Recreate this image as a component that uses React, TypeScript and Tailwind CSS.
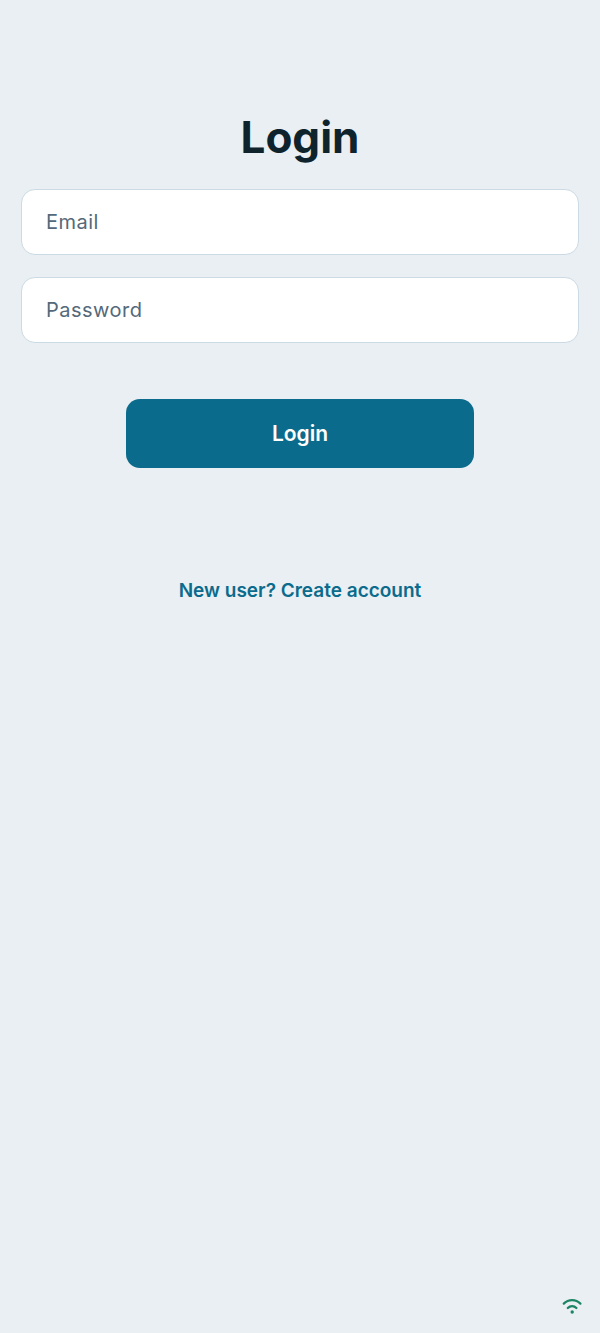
import React, { useState } from 'react';

const fieldClass =
    "w-full h-[66px] px-6 bg-white border border-[#cbdae3] rounded-[14px] text-[20px] tracking-wide text-[#0f232d] placeholder:text-[#54697a] placeholder:opacity-100 outline-none focus:border-[#0b6b8c]";

const WifiIcon: React.FC = () => (
    <svg
        className="w-6 h-6"
        viewBox="0 0 24 24"
        fill="none"
        stroke="#1b8463"
        strokeWidth="2.3"
        strokeLinecap="round"
        role="img"
        aria-label="Online"
    >
        <path d="M3.8 10.6C8.4 6 15.8 6 20.4 10.6" />
        <path d="M7.8 15C10.2 12.4 14 12.4 16.4 15" />
        <circle cx="12.2" cy="19" r="1.7" fill="#1b8463" stroke="none" />
    </svg>
);

const App: React.FC = () => {
    const [email, setEmail] = useState('');
    const [password, setPassword] = useState('');

    return (
        <div className="min-h-screen flex flex-col bg-[#e9eff3] font-['Inter',sans-serif]">
            <main className="flex-1 w-full px-[21px] pt-[108px] flex flex-col items-center">
                <h1 className="text-[44px] leading-[58px] font-bold text-[#0f232d]">Login</h1>

                <form
                    className="w-full mt-[23px] flex flex-col items-center"
                    onSubmit={(e) => e.preventDefault()}
                >
                    <div className="w-full flex flex-col gap-[22px]">
                        <input
                            type="email"
                            aria-label="Email"
                            placeholder="Email"
                            className={fieldClass}
                            value={email}
                            onChange={(e) => setEmail(e.target.value)}
                        />
                        <input
                            type="password"
                            aria-label="Password"
                            placeholder="Password"
                            className={fieldClass}
                            value={password}
                            onChange={(e) => setPassword(e.target.value)}
                        />
                    </div>

                    <button
                        type="submit"
                        className="w-5/8 h-[69px] mt-14 rounded-[14px] bg-[#0b6b8c] text-white text-[21px] font-semibold cursor-pointer"
                    >
                        Login
                    </button>
                </form>

                <a href="#signup" className="mt-[108px] text-[19px] leading-[30px] font-semibold text-[#0b6b8c]">
                    New user? Create account
                </a>
            </main>

            {/* Connection status */}
            <footer className="flex justify-end px-4 pb-4">
                <WifiIcon />
            </footer>
        </div>
    );
};

export default App;
